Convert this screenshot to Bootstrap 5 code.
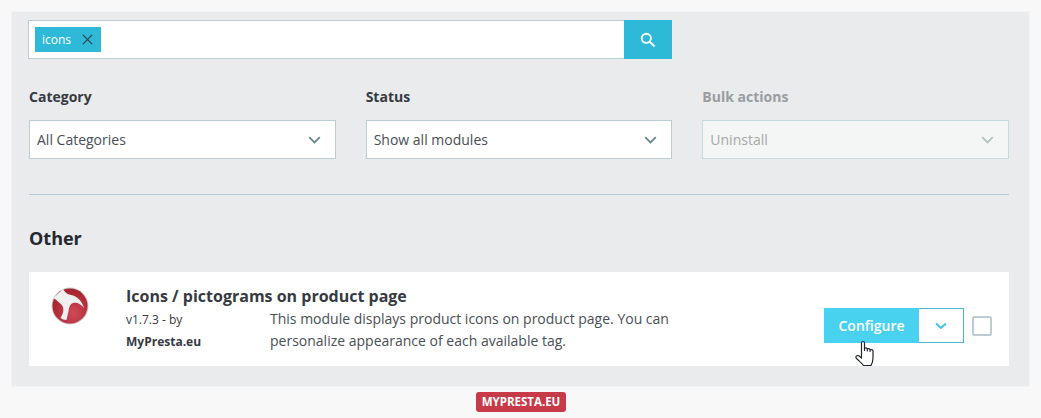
<!DOCTYPE html>
<html lang="en">
<head>
<meta charset="utf-8">
<title>Modules</title>
<link rel="stylesheet" href="https://cdn.jsdelivr.net/npm/bootstrap@5.3.0/dist/css/bootstrap.min.css">
<style>
html,body{height:418px;overflow:hidden}
body{background:#f8f8f8;font-family:"Open Sans",sans-serif;color:#363a41;font-size:14px}
.shell{margin:11px 11px 0;width:1019px;height:376px;background:#e9ebed;border:1px solid #f2f3f4;padding:8px 20px 0 16px}
.searchrow{width:596px;height:39px;background:#fff;border:1px solid #bbcdd2;border-right:0}
.chip{margin:6px;width:66px;height:25px;background:#2eb9d8;color:#fff;font-size:12px;line-height:25px;padding-left:7px}
.searchbtn{width:48px;height:39px;background:#2eb9d8;border:0;border-radius:0;padding:0}
.filters{display:grid;grid-template-columns:repeat(3,1fr);column-gap:30px;width:980px;margin:28px 0 0 1px}
.flabel{font-size:14px;font-weight:700;line-height:20px;margin-bottom:13px;color:#363a41}
.fbox{height:39px;background:#fff;border:1px solid #bbcdd2;padding:0 14px 0 7px;font-size:14px;color:#4a4e55}
.offfilter .flabel{color:#9a9c9f}
.offfilter .fbox{background:#f4f6f5;border-color:#c9dadd;color:#a4a8a8}
.rule{width:980px;margin:35px 0 0 1px;border-top:1px solid #b5cdd6;height:0}
.grouphead{margin:31px 0 0 1px;font-size:18px;font-weight:700;line-height:24px;color:#25282c;height:25px}
.modrow{width:980px;height:94px;margin:21px 0 0 1px;background:#fff;position:relative}
.logocell{width:97px;padding:15px 0 0 22px}
.infocell{padding-top:14px;width:650px}
.modname{font-size:16px;font-weight:700;line-height:20px;color:#363a41}
.modver{width:144px;font-size:12px;line-height:22px;margin-top:3px;color:#363a41;flex:none}
.modver b{font-weight:700}
.moddesc{font-size:14px;line-height:22px;margin-top:2px;color:#4a4e55;width:420px}
.actions{position:absolute;left:795px;top:36px}
.btnconf{width:95px;height:35px;background:#48d2f0;color:#fff;border:0;border-radius:0;font-size:14px;font-weight:600;padding:0}
.btnmore{width:45px;height:35px;background:#fff;border:1px solid #48b7d0;border-left:0;border-radius:0;padding:0}
.tick{width:20px;height:20px;margin-left:8px;border:2px solid #bbcdd2;border-radius:2px;background:#fff}
.handptr{position:absolute;left:826px;top:68px}
.tagstrip{width:90px;height:20px;margin:5px 0 0 476px;background:#c73a47;border-radius:3px;color:#fff;font-size:11.5px;font-weight:700;line-height:20px;text-align:center}
</style>
</head>
<body>
<div class="shell">
  <div class="d-flex">
    <div class="searchrow d-flex">
      <div class="chip d-flex align-items-center justify-content-between">
        <span>icons</span>
        <svg class="me-2" width="11" height="11" viewBox="0 0 12 12"><path d="M1 1l10 10M11 1L1 11" stroke="#31444f" stroke-width="1.3" fill="none"/></svg>
      </div>
    </div>
    <button class="searchbtn btn d-flex align-items-center justify-content-center" aria-label="Search">
      <svg width="16" height="16" viewBox="0 0 17 17"><circle cx="6.7" cy="6.7" r="4.9" stroke="#fff" stroke-width="2" fill="none"/><path d="M10.5 10.5l5 5" stroke="#fff" stroke-width="2.2" fill="none"/></svg>
    </button>
  </div>
  <div class="filters">
    <div>
      <div class="flabel">Category</div>
      <div class="fbox d-flex align-items-center justify-content-between"><span>All Categories</span>
        <svg width="13" height="8" viewBox="0 0 14 9"><path d="M1 1.2l6 6 6-6" stroke="#6c868e" stroke-width="2" fill="none"/></svg></div>
    </div>
    <div>
      <div class="flabel">Status</div>
      <div class="fbox d-flex align-items-center justify-content-between"><span>Show all modules</span>
        <svg width="13" height="8" viewBox="0 0 14 9"><path d="M1 1.2l6 6 6-6" stroke="#6c868e" stroke-width="2" fill="none"/></svg></div>
    </div>
    <div class="offfilter">
      <div class="flabel">Bulk actions</div>
      <div class="fbox d-flex align-items-center justify-content-between"><span>Uninstall</span>
        <svg width="13" height="8" viewBox="0 0 14 9"><path d="M1 1.2l6 6 6-6" stroke="#b5c2c5" stroke-width="2" fill="none"/></svg></div>
    </div>
  </div>
  <div class="rule"></div>
  <div class="grouphead">Other</div>
  <div class="modrow d-flex">
    <div class="logocell">
      <svg width="38" height="38" viewBox="0 0 38 38">
        <defs><radialGradient id="lg" cx="0.6" cy="0.7" r="0.6"><stop offset="0" stop-color="#d04a58"/><stop offset="1" stop-color="#a92530"/></radialGradient></defs>
        <circle cx="19" cy="19" r="18.5" fill="#c9c9c9"/>
        <circle cx="19" cy="19" r="17.5" fill="url(#lg)"/>
        <path d="M2.5 11L12 2C14 5 16 7.500 20 8C26 9 31 14 33 21C30 17 26 15 22 16C19 17 18 20 17.500 24L15.500 33C13 33 11 32 9.500 31C12 27 13 23 12 20C10 16 6 14 2.500 11Z" fill="#f1efef"/>
      </svg>
    </div>
    <div class="infocell">
      <div class="modname">Icons / pictograms on product page</div>
      <div class="d-flex">
        <div class="modver">v1.7.3 - by<br><b>MyPresta.eu</b></div>
        <div class="moddesc">This module displays product icons on product page. You can personalize appearance of each available tag.</div>
      </div>
    </div>
    <div class="actions d-flex align-items-center">
      <button class="btn btnconf">Configure</button>
      <button class="btn btnmore d-flex align-items-center justify-content-center" aria-label="More">
        <svg width="12" height="8" viewBox="0 0 12 8"><path d="M1 1.5l5 4.5 5-4.5" stroke="#3ec3e2" stroke-width="2" fill="none"/></svg>
      </button>
      <div class="tick"></div>
    </div>
    <svg class="handptr" width="20" height="27" viewBox="0 0 20 27">
      <path d="M6.500 15V3C6.500 1 9.500 1 9.500 3V10.500V9C9.500 7.500 12.300 7.500 12.300 9V11V9.500C12.300 8.300 15 8.300 15 9.800V11.500V10.500C15 9.300 18 9.300 18 11V18C18 21 17.300 23 16 25.500H8.500C6.500 23 4 21 1.500 18.500C0 16.800 1.800 14.800 3.800 15.800L6.500 18Z" fill="#fff" stroke="#1f2530" stroke-width="1.2" stroke-linejoin="round"/>
    </svg>
  </div>
</div>
<div class="tagstrip">MYPRESTA.EU</div>
<script src="https://cdn.jsdelivr.net/npm/bootstrap@5.3.0/dist/js/bootstrap.bundle.min.js"></script>
</body>
</html>
